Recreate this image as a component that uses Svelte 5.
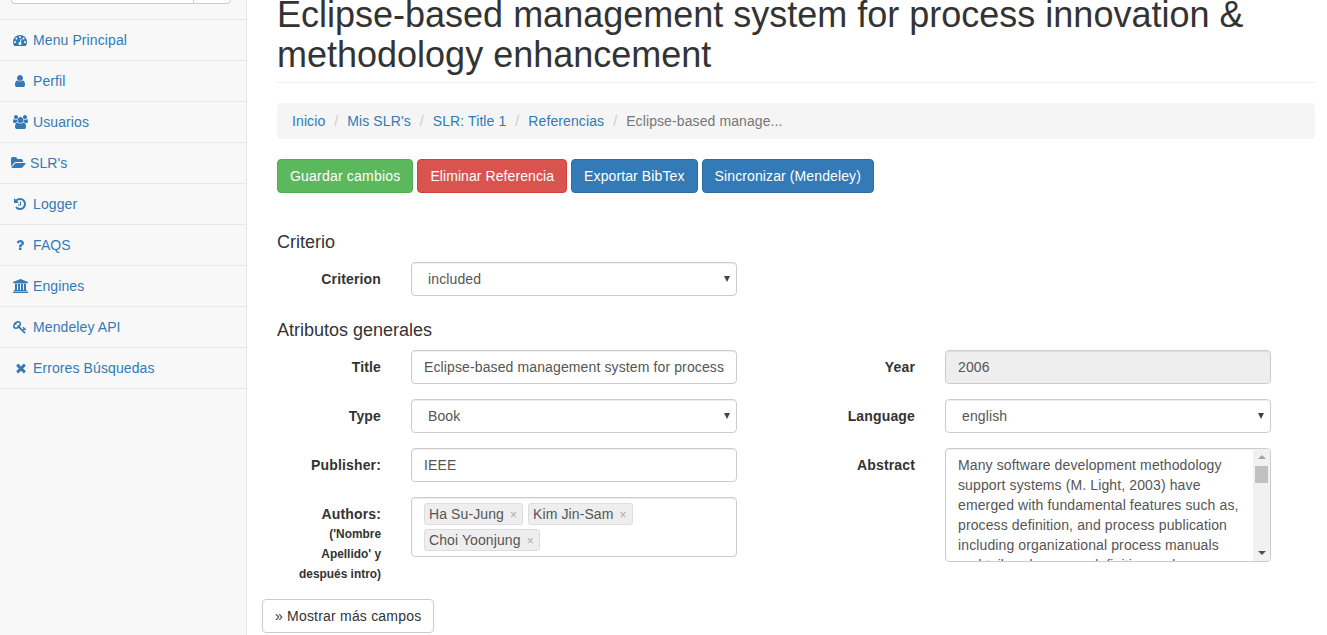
<script>
	const icons = {
		dashboard: { w: 1792, d: 'M384 1152q0-53-37.5-90.5t-90.5-37.5-90.5 37.5-37.5 90.5 37.5 90.5 90.5 37.5 90.5-37.5 37.5-90.5zm192-448q0-53-37.5-90.5t-90.5-37.5-90.5 37.5-37.5 90.5 37.5 90.5 90.5 37.5 90.5-37.5 37.5-90.5zm428 481l101-382q6-26-7.5-48.5t-38.5-29.5-48 6.5-30 39.5l-101 382q-60 5-107 43.5t-63 98.5q-20 77 20 146t117 89 146-20 89-117q16-60-6-117t-72-91zm660-33q0-53-37.5-90.5t-90.5-37.5-90.5 37.5-37.5 90.5 37.5 90.5 90.5 37.5 90.5-37.5 37.5-90.5zm-640-640q0-53-37.5-90.5t-90.5-37.5-90.5 37.5-37.5 90.5 37.5 90.5 90.5 37.5 90.5-37.5 37.5-90.5zm448 192q0-53-37.5-90.5t-90.5-37.5-90.5 37.5-37.5 90.5 37.5 90.5 90.5 37.5 90.5-37.5 37.5-90.5zm320 448q0 261-141 483-19 29-54 29h-1402q-35 0-54-29-141-221-141-483 0-182 71-348t191-286 286-191 348-71 348 71 286 191 191 286 71 348z' },
		user: { w: 1792, d: 'M1536 1399q0 109-62.5 187t-150.5 78h-854q-88 0-150.5-78t-62.5-187q0-85 8.5-160.5t31.5-152 58.5-131 94-89 134.5-34.5q131 128 313 128t313-128q76 0 134.5 34.5t94 89 58.5 131 31.5 152 8.5 160.5zm-256-887q0 159-112.5 271.5t-271.5 112.5-271.5-112.5-112.5-271.5 112.5-271.5 271.5-112.5 271.5 112.5 112.5 271.5z' },
		users: { w: 1920, d: 'M593 896q-162 5-265 128h-134q-82 0-138-40.5t-56-118.5q0-353 124-353 6 0 43.5 21t97.5 42.5 119 21.5q67 0 133-23-5 37-5 66 0 139 81 256zm1071 637q0 120-73 189.5t-194 69.5h-874q-121 0-194-69.5t-73-189.5q0-53 3.5-103.5t14-109 26.5-108.5 43-97.5 62-81 85.5-53.5 111.5-20q10 0 43 21.5t73 48 107 48 135 21.5 135-21.5 107-48 73-48 43-21.5q61 0 111.5 20t85.5 53.5 62 81 43 97.5 26.5 108.5 14 109 3.5 103.5zm-1024-1277q0 106-75 181t-181 75-181-75-75-181 75-181 181-75 181 75 75 181zm704 384q0 159-112.5 271.5t-271.5 112.5-271.5-112.5-112.5-271.5 112.5-271.5 271.5-112.5 271.5 112.5 112.5 271.5zm576 225q0 78-56 118.5t-138 40.5h-134q-103-123-265-128 81-117 81-256 0-29-5-66 66 23 133 23 59 0 119-21.5t97.5-42.5 43.5-21q124 0 124 353zm-128-609q0 106-75 181t-181 75-181-75-75-181 75-181 181-75 181 75 75 181z' },
		folder: { w: 1920, d: 'M1879 952q0 31-31 66l-336 396q-43 51-120.5 86.5t-143.5 35.5h-1088q-34 0-60.5-13t-26.5-43q0-31 31-66l336-396q43-51 120.5-86.5t143.5-35.5h1088q34 0 60.5 13t26.5 43zm-343-344v160h-832q-94 0-197 47.5t-164 119.5l-337 396-5 6q0-4-.5-12.5t-.5-12.5v-960q0-92 66-158t158-66h320q92 0 158 66t66 158v32h544q92 0 158 66t66 158z' },
		history: { w: 1792, d: 'M1664 896q0 156-61 298t-164 245-245 164-298 61q-172 0-327-72.5t-264-204.5q-7-10-6.5-22.5t8.5-20.5l137-138q10-9 25-9 16 2 23 12 73 95 179 147t225 52q104 0 198.5-40.5t163.5-109.5 109.5-163.5 40.5-198.5-40.5-198.5-109.5-163.5-163.5-109.5-198.5-40.5q-98 0-188 35.5t-160 101.5l137 138q31 30 14 69-17 40-59 40h-448q-26 0-45-19t-19-45v-448q0-42 40-59 39-17 69 14l130 129q107-101 244.5-156.5t284.5-55.5q156 0 298 61t245 164 164 245 61 298zm-640-288v448q0 14-9 23t-23 9h-320q-14 0-23-9t-9-23v-64q0-14 9-23t23-9h224v-352q0-14 9-23t23-9h64q14 0 23 9t9 23z' },
		question: { w: 1100, d: 'M704 1256v240q0 16-12 28t-28 12h-240q-16 0-28-12t-12-28v-240q0-16 12-28t28-12h240q16 0 28 12t12 28zm316-600q0 54-15.5 101t-35 76.5-55 59.5-57.5 43.5-61 35.5q-41 23-68.5 65t-27.5 67q0 17-12 32.5t-28 15.5h-240q-15 0-25.5-18.5t-10.5-37.5v-45q0-83 65-156.5t143-108.5q59-27 84-56t25-76q0-42-46.5-74t-107.5-32q-65 0-108 29-35 25-107 115-13 16-31 16-12 0-25-8l-164-125q-13-10-15.5-25t5.5-28q160-266 464-266 80 0 161 31t146 83 106 127.5 41 158.5z' },
		bank: { w: 1920, d: 'M960 0l960 384v128h-128q0 26-20.5 45t-48.5 19h-1526q-28 0-48.5-19t-20.5-45h-128v-128zm-704 640h256v768h128v-768h256v768h128v-768h256v768h128v-768h256v768h59q28 0 48.5 19t20.5 45v64h-1664v-64q0-26 20.5-45t48.5-19h59v-768zm1595 960q28 0 48.5 19t20.5 45v128h-1920v-128q0-26 20.5-45t48.5-19h1782z' },
		key: { w: 1792, d: 'M832 512q0-80-56-136t-136-56-136 56-56 136q0 42 19 83-41-19-83-19-80 0-136 56t-56 136 56 136 136 56 136-56 56-136q0-42-19-83 41 19 83 19 80 0 136-56t56-136zm851 704q0 17-49 66t-66 49q-9 0-28.5-16t-36.5-33-38.5-40-24.5-26l-96 96 220 220q28 28 28 68 0 42-39 81t-81 39q-40 0-68-28l-671-671q-176 131-365 131-163 0-265.5-102.5t-102.5-265.5q0-160 95-313t248-248 313-95q163 0 265.5 102.5t102.5 265.5q0 189-131 365l355 355 96-96q-3-3-26-24.5t-40-38.5-33-36.5-16-28.5q0-17 49-66t66-49q13 0 23 10 6 6 46 44.5t82 79.5 86.5 86 73 78 28.5 41z' },
		times: { w: 1602, d: 'M1490 1322q0 40-28 68l-136 136q-28 28-68 28t-68-28l-294-294-294 294q-28 28-68 28t-68-28l-136-136q-28-28-28-68t28-68l294-294-294-294q-28-28-28-68t28-68l136-136q28-28 68-28t68 28l294 294 294-294q28-28 68-28t68 28l136 136q28 28 28 68t-28 68l-294 294 294 294q28 28 28 68z' }
	};

	const menu = [
		{ icon: 'dashboard', label: 'Menu Principal' },
		{ icon: 'user', label: 'Perfil' },
		{ icon: 'users', label: 'Usuarios' },
		{ icon: 'folder', label: "SLR's", tight: true },
		{ icon: 'history', label: 'Logger' },
		{ icon: 'question', label: 'FAQS' },
		{ icon: 'bank', label: 'Engines' },
		{ icon: 'key', label: 'Mendeley API' },
		{ icon: 'times', label: 'Errores Búsquedas' }
	];

	const crumbs = ['Inicio', "Mis SLR's", 'SLR: Title 1', 'Referencias'];
	const authors = ['Ha Su-Jung', 'Kim Jin-Sam', 'Choi Yoonjung'];
	const abstract =
		'Many software development methodology support systems (M. Light, 2003) have emerged with fundamental features such as, process definition, and process publication including organizational process manuals and tailored process definition and process the';
</script>

<div class="page">
	<aside class="sidebar">
		<div class="search">
			<input type="text" aria-label="Buscar" />
			<span class="search-btn"></span>
		</div>
		<nav>
			{#each menu as item}
				<a href="#top" class="item">
					<span class="icon" class:tight={item.tight}>
						<svg style="width: {(icons[item.icon].w / 1792) * 14}px" viewBox="0 0 {icons[item.icon].w} 1792" aria-hidden="true">
							<path d={icons[item.icon].d} />
						</svg>
					</span>
					{item.label}
				</a>
			{/each}
		</nav>
	</aside>

	<main class="content">
		<h1>Eclipse-based management system for process innovation &amp; methodology enhancement</h1>

		<ol class="breadcrumb">
			{#each crumbs as crumb}
				<li><a href="#top">{crumb}</a><span class="sep">/</span></li>
			{/each}
			<li class="active">Eclipse-based manage...</li>
		</ol>

		<div class="actions">
			<button class="btn success">Guardar cambios</button>
			<button class="btn danger">Eliminar Referencia</button>
			<button class="btn primary">Exportar BibTex</button>
			<button class="btn primary">Sincronizar (Mendeley)</button>
		</div>

		<h4 class="first">Criterio</h4>
		<div class="field">
			<label for="criterion">Criterion</label>
			<div class="select">
				<select id="criterion"><option>included</option></select>
			</div>
		</div>

		<h4>Atributos generales</h4>
		<div class="columns">
			<div class="col">
				<div class="field">
					<label for="title">Title</label>
					<input id="title" value="Eclipse-based management system for process innovation & methodology enhancement" />
				</div>
				<div class="field">
					<label for="type">Type</label>
					<div class="select">
						<select id="type"><option>Book</option></select>
					</div>
				</div>
				<div class="field">
					<label for="publisher">Publisher:</label>
					<input id="publisher" value="IEEE" />
				</div>
				<div class="field">
					<div class="label-block">
						<label for="tags">Authors:</label>
						<small>('Nombre Apellido' y después intro)</small>
					</div>
					<div class="tags" id="tags">
						{#each authors as author}
							<span class="tag">{author}<span class="remove">×</span></span>
						{/each}
					</div>
				</div>
			</div>

			<div class="col">
				<div class="field">
					<label for="year">Year</label>
					<input id="year" value="2006" disabled />
				</div>
				<div class="field">
					<label for="language">Language</label>
					<div class="select">
						<select id="language"><option>english</option></select>
					</div>
				</div>
				<div class="field">
					<label for="abstract">Abstract</label>
					<div class="textarea">
						<textarea id="abstract" readonly value={abstract}></textarea>
						<div class="scrollbar">
							<span class="arrow up"></span>
							<span class="thumb"></span>
							<span class="arrow down"></span>
						</div>
					</div>
				</div>
			</div>
		</div>

		<button class="btn more">» Mostrar más campos</button>
	</main>
</div>

<style>
	:global(body) {
		margin: 0;
		overflow: hidden;
		background: #fff;
	}

	.page {
		display: flex;
		height: 635px;
		overflow: hidden;
		font-family: 'Liberation Sans', Arial, sans-serif;
		font-size: 14px;
		line-height: 20px;
		letter-spacing: 0.1px;
		color: #333;
	}

	.sidebar {
		flex: 0 0 246px;
		background: #f8f8f8;
		border-right: 1px solid #e7e7e7;
	}

	.search {
		display: flex;
		height: 19px;
		box-sizing: border-box;
		padding: 0 15px 15px 11px;
		align-items: flex-end;
	}

	.search input {
		flex: 1;
		min-width: 0;
		height: 34px;
		margin-top: -30px;
		box-sizing: border-box;
		border: 1px solid #ccc;
		border-right: 0;
		border-radius: 4px 0 0 4px;
		background: #fff;
		padding: 0;
	}

	.search-btn {
		flex: 0 0 38px;
		height: 34px;
		margin-top: -30px;
		box-sizing: border-box;
		border: 1px solid #ccc;
		border-radius: 0 4px 4px 0;
		background: #fff;
	}

	nav {
		border-top: 1px solid #e7e7e7;
	}

	.item {
		display: flex;
		align-items: center;
		height: 41px;
		box-sizing: border-box;
		padding: 0 11px;
		border-bottom: 1px solid #e7e7e7;
		color: #337ab7;
		text-decoration: none;
	}

	.icon {
		display: flex;
		justify-content: center;
		flex: 0 0 18px;
		margin-right: 4px;
	}

	.icon.tight {
		flex-basis: 15px;
	}

	.icon svg {
		display: block;
		flex: none;
		height: 14px;
		fill: #337ab7;
	}

	.content {
		flex: 1;
		min-width: 0;
		padding: 0 12px 0 30px;
	}

	h1 {
		margin: -5px 0 0;
		padding-bottom: 8px;
		border-bottom: 1px solid #eee;
		font-size: 36px;
		font-weight: 500;
		line-height: 39.6px;
		letter-spacing: 0;
		color: #333;
	}

	.breadcrumb {
		display: flex;
		list-style: none;
		margin: 20px 0;
		padding: 8px 15px;
		background: #f5f5f5;
		border-radius: 4px;
		color: #777;
	}

	.breadcrumb a {
		color: #337ab7;
		text-decoration: none;
	}

	.sep {
		padding: 0 9px;
		color: #ccc;
	}

	.actions {
		display: flex;
		gap: 4px;
	}

	.btn {
		height: 34px;
		box-sizing: border-box;
		padding: 6px 12px;
		border: 1px solid transparent;
		border-radius: 4px;
		font: inherit;
		letter-spacing: 0.08px;
		color: #fff;
	}

	.success {
		letter-spacing: 0.2px;
		background: #5cb85c;
		border-color: #4cae4c;
	}

	.danger {
		background: #d9534f;
		border-color: #d43f3a;
	}

	.primary {
		letter-spacing: 0.11px;
		background: #337ab7;
		border-color: #2e6da4;
	}

	h4 {
		margin: 25px 0 9px;
		font-size: 18px;
		font-weight: 500;
		line-height: 19.8px;
		letter-spacing: 0;
		color: #333;
	}

	h4.first {
		margin-top: 40px;
	}

	.field {
		display: flex;
		gap: 30px;
		margin-bottom: 15px;
	}

	.field > label,
	.label-block {
		flex: 0 0 104px;
		width: 104px;
		padding-top: 7px;
		text-align: right;
		font-weight: 700;
		letter-spacing: 0.15px;
	}

	.label-block label {
		display: block;
	}

	.label-block small {
		display: block;
		font-size: 11.9px;
		line-height: 20px;
		letter-spacing: 0;
	}

	.columns {
		display: flex;
		gap: 74px;
	}

	.col {
		flex: 0 0 460px;
	}

	input,
	select,
	textarea {
		font: inherit;
		letter-spacing: 0.12px;
		color: #555;
		outline: none;
	}

	.field input,
	.select select {
		width: 326px;
		height: 34px;
		box-sizing: border-box;
		padding: 6px 12px;
		border: 1px solid #ccc;
		border-radius: 4px;
		background: #fff;
		box-shadow: inset 0 1px 1px rgba(0, 0, 0, 0.075);
	}

	.field input:disabled {
		background: #eee;
		opacity: 1;
	}

	.select {
		position: relative;
		width: 326px;
		height: 34px;
	}

	.select select {
		display: block;
		appearance: none;
		padding-left: 16px;
	}

	.select::after {
		content: '';
		position: absolute;
		right: 7px;
		top: 14px;
		border-style: solid;
		border-width: 6px 3px 0;
		border-color: #444 transparent transparent;
	}

	.tags {
		display: flex;
		flex-wrap: wrap;
		align-content: flex-start;
		gap: 4px 5px;
		width: 326px;
		height: 60px;
		box-sizing: border-box;
		padding: 5px 12px;
		border: 1px solid #ccc;
		border-radius: 4px;
		box-shadow: inset 0 1px 1px rgba(0, 0, 0, 0.075);
		color: #555;
	}

	.tag {
		height: 22px;
		box-sizing: border-box;
		padding: 0 5px 0 4px;
		background: #eee;
		border: 1px solid #ddd;
		border-radius: 3px;
		line-height: 20px;
	}

	.remove {
		margin-left: 6px;
		color: #aaa;
		font-size: 12px;
	}

	.textarea {
		position: relative;
		width: 326px;
		height: 114px;
	}

	.textarea textarea {
		display: block;
		width: 100%;
		height: 100%;
		box-sizing: border-box;
		padding: 6px 29px 6px 12px;
		border: 1px solid #ccc;
		border-radius: 4px;
		resize: none;
		overflow: hidden;
		box-shadow: inset 0 1px 1px rgba(0, 0, 0, 0.075);
	}

	.scrollbar {
		position: absolute;
		top: 1px;
		right: 1px;
		bottom: 1px;
		width: 17px;
		display: flex;
		flex-direction: column;
		align-items: center;
		background: #f1f1f1;
		border-radius: 0 3px 3px 0;
	}

	.arrow {
		flex: 0 0 auto;
		margin: 6px 0 7px;
		border-style: solid;
		border-color: transparent;
	}

	.arrow.up {
		border-width: 0 4px 4px;
		border-bottom-color: #a3a3a3;
	}

	.arrow.down {
		margin: auto 0 6px;
		border-width: 4px 4px 0;
		border-top-color: #505050;
	}

	.thumb {
		width: 13px;
		height: 17px;
		background: #c1c1c1;
	}

	.more {
		display: block;
		margin: 0 0 0 -15px;
		background: #fff;
		border-color: #ccc;
		letter-spacing: 0.2px;
		color: #333;
	}
</style>
